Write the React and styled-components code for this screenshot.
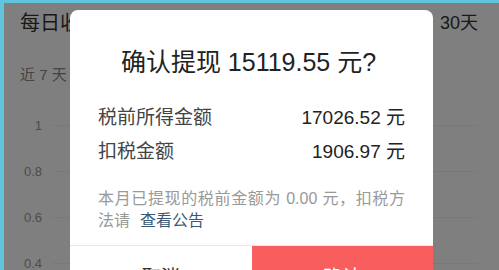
import React from "react";
import styled, { createGlobalStyle } from "styled-components";

const GlobalStyle = createGlobalStyle`
  html, body { margin: 0; padding: 0; overflow: hidden; }
  body {
    font-family: "Liberation Sans", "Noto Sans CJK SC", sans-serif;
    background: #fff;
  }
`;

const Frame = styled.div`
  position: relative;
  width: 499px;
  height: 270px;
  box-sizing: border-box;
  border-top: 3px solid #62c3dc;
  border-left: 4px solid #62c3dc;
  overflow: hidden;
  background: #fff;
`;

const Page = styled.div`
  display: flex;
  flex-direction: column;
  padding: 5px 21px 0 16px;
`;

const Header = styled.div`
  display: flex;
  justify-content: space-between;
  align-items: center;
  height: 26px;
`;

const PageTitle = styled.div`
  font-size: 20px;
  color: #333;
`;

const Range = styled.div`
  font-size: 18px;
  color: #333;
`;

const Sub = styled.div`
  margin-top: 31px;
  font-size: 15px;
  line-height: 20px;
  color: #888;
`;

const Chart = styled.div`
  margin-top: 17px;
  display: flex;
  flex-direction: column;
`;

const GridRow = styled.div`
  display: flex;
  align-items: center;
  height: 46px;
`;

const AxisLabel = styled.div`
  width: 22px;
  text-align: right;
  font-size: 13px;
  color: #999;
`;

const GridLine = styled.div`
  flex: 1;
  margin-left: 10px;
  height: 1px;
  background: #f2f2f2;
`;

const Overlay = styled.div`
  position: absolute;
  inset: 0;
  background: rgba(0, 0, 0, 0.5);
  display: flex;
  justify-content: center;
  align-items: flex-start;
  padding-top: 7px;
`;

const Modal = styled.div`
  width: 363px;
  background: #fff;
  border-radius: 8px 8px 0 0;
  display: flex;
  flex-direction: column;
`;

const ModalTitle = styled.div`
  padding-top: 36px;
  padding-right: 6px;
  font-size: 25px;
  line-height: 32px;
  text-align: center;
  color: #222;
`;

const Rows = styled.div`
  margin-top: 20px;
  padding: 0 28px;
  display: flex;
  flex-direction: column;
`;

const Row = styled.div`
  display: flex;
  justify-content: space-between;
  align-items: center;
  height: 34px;
  font-size: 19px;
`;

const Label = styled.span`
  color: #444;
`;

const Value = styled.span`
  color: #222;
`;

const Note = styled.div`
  margin-top: 22px;
  padding: 0 28px 13px;
  font-size: 16px;
  line-height: 22px;
  color: #999;
  text-align: justify;
`;

const Link = styled.span`
  margin-left: 10px;
  color: #3b5874;
`;

const Actions = styled.div`
  display: flex;
  border-top: 1px solid #e8e8e8;
  height: 58px;
`;

const ActionButton = styled.button`
  flex: 1;
  border: none;
  margin: 0;
  padding: 0;
  font-family: inherit;
  font-size: 19px;
  background: ${(p) => (p.$primary ? "#f85e5e" : "#fff")};
  color: ${(p) => (p.$primary ? "#fff" : "#333")};
`;

export default function App() {
  const ticks = ["1", "0.8", "0.6", "0.4"];
  return (
    <>
      <GlobalStyle />
      <Frame>
        <Page>
          <Header>
            <PageTitle>每日收益</PageTitle>
            <Range>30天</Range>
          </Header>
          <Sub>近 7 天</Sub>
          <Chart>
            {ticks.map((t) => (
              <GridRow key={t}>
                <AxisLabel>{t}</AxisLabel>
                <GridLine />
              </GridRow>
            ))}
          </Chart>
        </Page>
        <Overlay>
          <Modal>
            <ModalTitle>确认提现 15119.55 元?</ModalTitle>
            <Rows>
              <Row>
                <Label>税前所得金额</Label>
                <Value>17026.52 元</Value>
              </Row>
              <Row>
                <Label>扣税金额</Label>
                <Value>1906.97 元</Value>
              </Row>
            </Rows>
            <Note>
              本月已提现的税前金额为 0.00 元，扣税方法请<Link>查看公告</Link>
            </Note>
            <Actions>
              <ActionButton>取消</ActionButton>
              <ActionButton $primary>确认</ActionButton>
            </Actions>
          </Modal>
        </Overlay>
      </Frame>
    </>
  );
}
